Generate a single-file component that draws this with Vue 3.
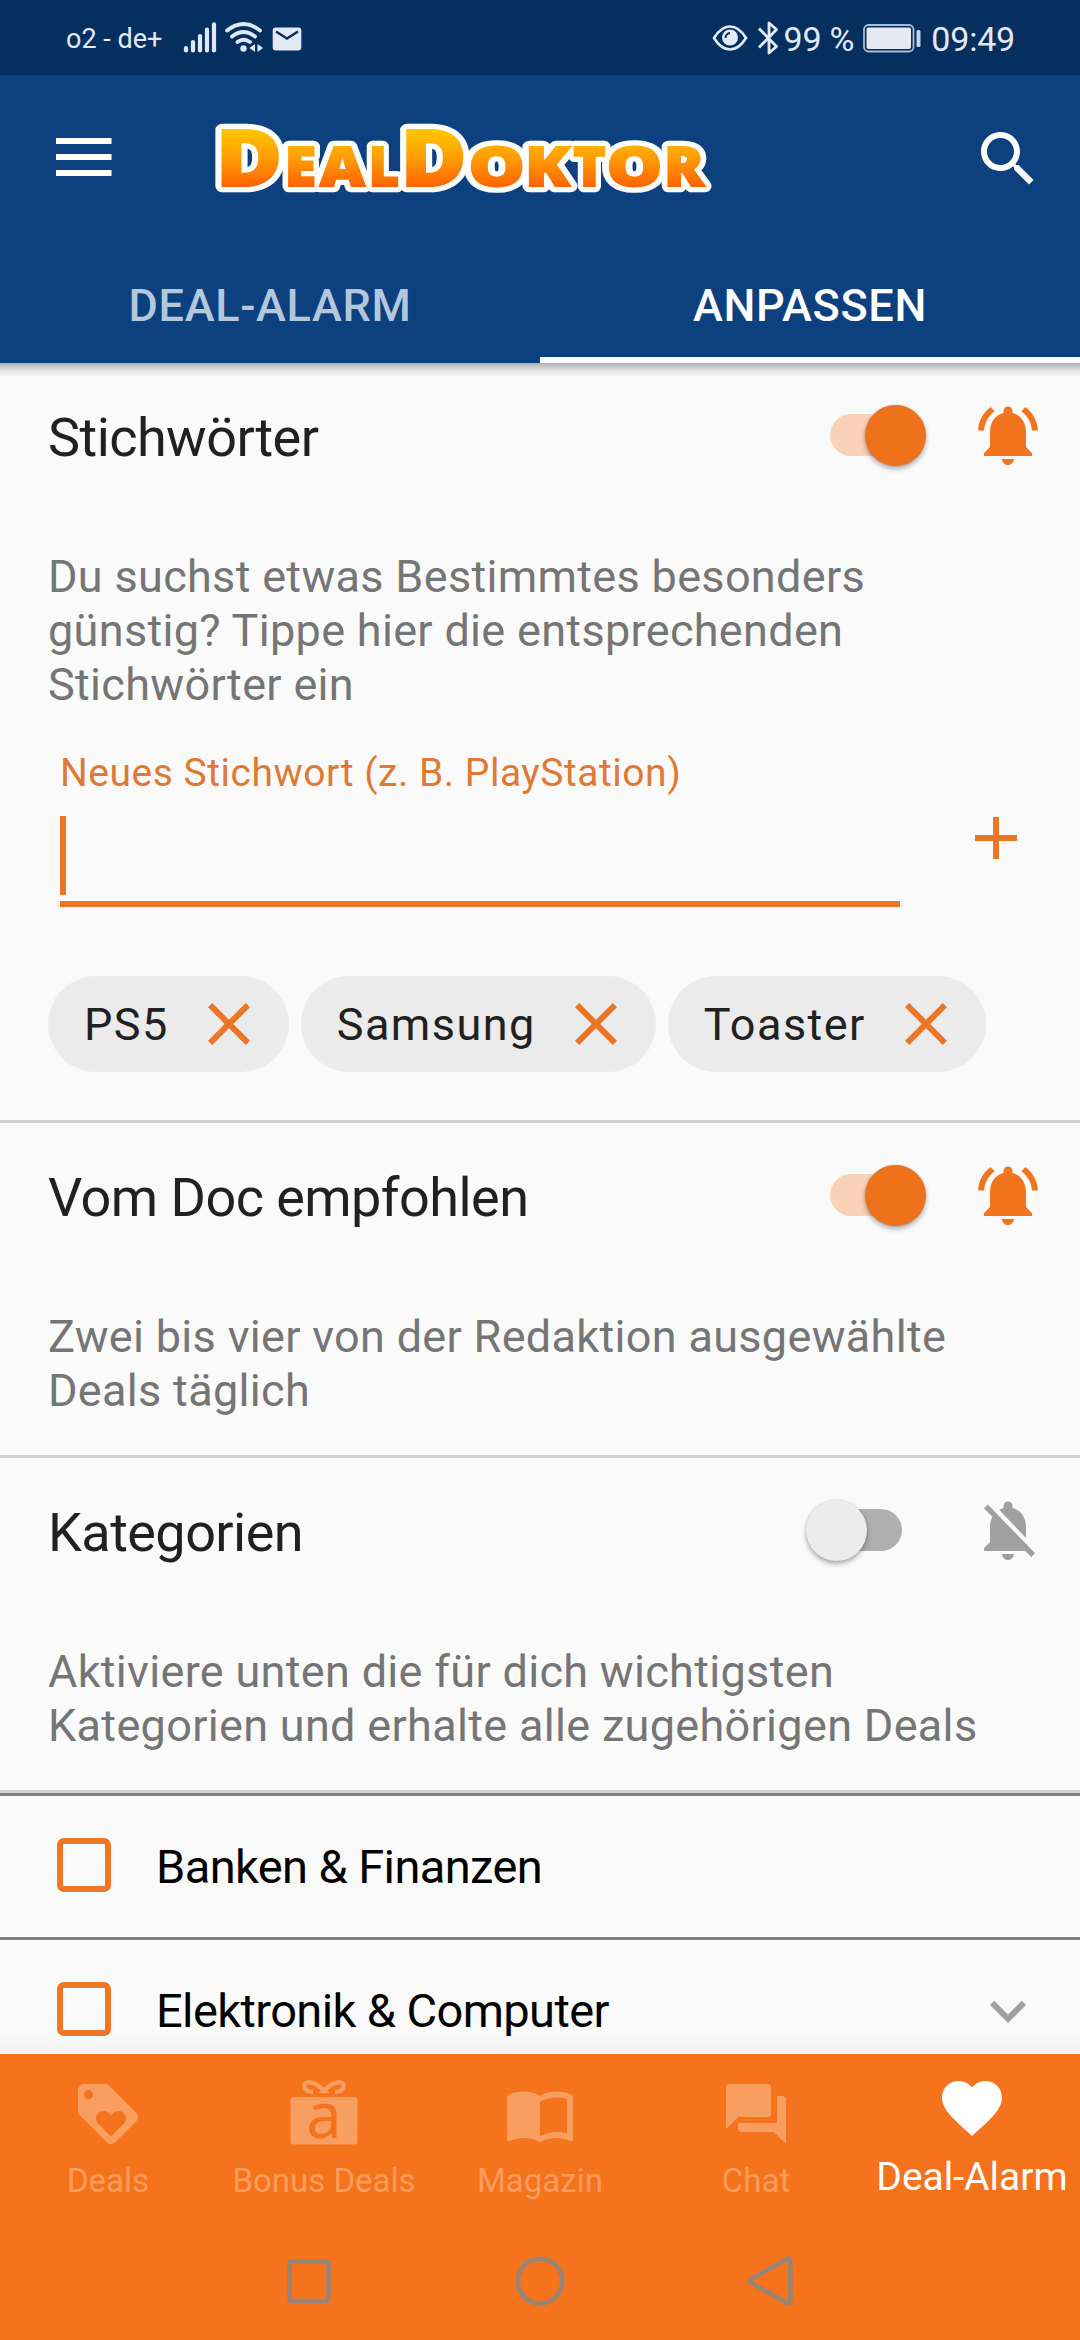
<script setup>
import { ref } from 'vue'

const logo = [
  { ch: 'D', x: 215.7, size: 78, len: 66.5 },
  { ch: 'E', x: 284.7, size: 54.6, len: 31.4 },
  { ch: 'A', x: 319.9, size: 54.6, len: 44.8 },
  { ch: 'L', x: 368.7, size: 54.6, len: 30.4 },
  { ch: 'D', x: 400.6, size: 78, len: 66.2 },
  { ch: 'O', x: 468.6, size: 54.6, len: 56.4 },
  { ch: 'K', x: 525.1, size: 54.6, len: 45 },
  { ch: 'T', x: 573.3, size: 54.6, len: 32.3 },
  { ch: 'O', x: 606.5, size: 54.6, len: 55.9 },
  { ch: 'R', x: 664, size: 54.6, len: 39.9 }
]

const bellOn =
  'M7.58 4.08L6.15 2.65C3.75 4.48 2.17 7.3 2.03 10.5h2c.15-2.65 1.51-4.97 3.55-6.42zm12.39 6.42h2c-.15-3.2-1.73-6.02-4.12-7.85l-1.42 1.43c2.02 1.45 3.39 3.77 3.54 6.42zM18 11c0-3.07-1.64-5.64-4.5-6.32V4c0-.83-.67-1.5-1.5-1.5s-1.5.67-1.5 1.5v.68C7.63 5.36 6 7.92 6 11v5l-2 2v1h16v-1l-2-2v-5zm-6 11c.14 0 .27-.01.4-.04.65-.14 1.18-.58 1.44-1.18.1-.24.15-.5.15-.78h-4c.01 1.1.9 2 2.01 2z'
const bellOff =
  'M20 18.69L7.84 6.14 5.27 3.49 4 4.76l2.8 2.8v.01c-.52.99-.8 2.16-.8 3.42v5l-2 2v1h13.73l2 2L21 19.72l-1-1.03zM12 22c1.11 0 2-.89 2-2h-4c0 1.11.89 2 2 2zm6-7.32V11c0-3.08-1.64-5.64-4.5-6.32V4c0-.83-.67-1.5-1.5-1.5s-1.5.67-1.5 1.5v.68c-.15.03-.29.08-.42.12-.1.03-.2.07-.3.11h-.01c-.01 0-.01 0-.02.01-.23.09-.46.2-.68.31 0 0-.01 0-.01.01L18 14.68z'

const sections = ref([
  {
    id: 'keywords',
    title: 'Stichwörter',
    on: true,
    text: 'Du suchst etwas Bestimmtes besonders\ngünstig? Tippe hier die entsprechenden\nStichwörter ein'
  },
  {
    id: 'doc',
    title: 'Vom Doc empfohlen',
    on: true,
    text: 'Zwei bis vier von der Redaktion ausgewählte\nDeals täglich'
  },
  {
    id: 'categories',
    title: 'Kategorien',
    on: false,
    text: 'Aktiviere unten die für dich wichtigsten\nKategorien und erhalte alle zugehörigen Deals'
  }
])

const keywords = ref(['PS5', 'Samsung', 'Toaster'])
const categories = [
  { name: 'Banken & Finanzen', expandable: false },
  { name: 'Elektronik & Computer', expandable: true }
]

const navItems = [
  {
    label: 'Deals',
    path: 'M21.41 11.58l-9-9C12.05 2.22 11.55 2 11 2H4c-1.1 0-2 .9-2 2v7c0 .55.22 1.05.59 1.42l9 9c.36.36.86.58 1.41.58.55 0 1.05-.22 1.41-.59l7-7c.37-.36.59-.86.59-1.41 0-.55-.23-1.06-.59-1.42zM5.5 7C4.67 7 4 6.33 4 5.5S4.67 4 5.5 4 7 4.67 7 5.5 6.33 7 5.5 7zm11.77 8.27L13 19.54l-4.27-4.27C8.28 14.81 8 14.19 8 13.5c0-1.38 1.12-2.5 2.5-2.5.69 0 1.32.28 1.77.74l.73.72.73-.73c.45-.45 1.08-.73 1.77-.73 1.38 0 2.5 1.12 2.5 2.5 0 .69-.28 1.32-.73 1.77z'
  },
  { label: 'Bonus Deals', gift: true },
  {
    label: 'Magazin',
    path: 'M21 5c-1.11-.35-2.33-.5-3.5-.5-1.95 0-4.05.4-5.5 1.5-1.45-1.1-3.55-1.5-5.5-1.5S2.45 4.9 1 6v14.65c0 .25.25.5.5.5.1 0 .15-.05.25-.05C3.1 20.45 5.05 20 6.5 20c1.95 0 4.05.4 5.5 1.5 1.35-.85 3.8-1.5 5.5-1.5 1.65 0 3.35.3 4.75 1.05.1.05.15.05.25.05.25 0 .5-.25.5-.5V6c-.6-.45-1.25-.75-2-1zm0 13.5c-1.1-.35-2.3-.5-3.5-.5-1.7 0-4.15.65-5.5 1.5V8c1.35-.85 3.8-1.5 5.5-1.5 1.2 0 2.4.15 3.5.5v11.5z'
  },
  {
    label: 'Chat',
    path: 'M21 6h-2v9H6v2c0 .55.45 1 1 1h11l4 4V7c0-.55-.45-1-1-1zm-4 6V3c0-.55-.45-1-1-1H3c-.55 0-1 .45-1 1v14l4-4h10c.55 0 1-.45 1-1z'
  },
  {
    label: 'Deal-Alarm',
    active: true,
    path: 'M12 21.35l-1.45-1.32C5.4 15.36 2 12.28 2 8.5 2 5.42 4.42 3 7.5 3c1.74 0 3.41.81 4.5 2.09C13.09 3.81 14.76 3 16.5 3 19.58 3 22 5.42 22 8.5c0 3.78-3.4 6.86-8.55 11.54L12 21.35z'
  }
]

function removeKeyword(word) {
  keywords.value = keywords.value.filter((k) => k !== word)
}
</script>

<template>
  <div class="screen">
    <div class="status">
      <div class="status-left">
        <span class="carrier">o2 - de+</span>
        <svg class="signal" width="34" height="32" viewBox="183 21 34 32" stroke="#dfe9fa" stroke-width="4.2" stroke-linecap="round">
          <path d="M186 48v2.5M193 42v8.5M200 36v14.5M207 29.6v20.9M214 24.3v26.2" />
        </svg>
        <svg class="wifi" width="40" height="32" viewBox="224 21 40 32" fill="none" stroke="#dfe9fa" stroke-width="3.8" stroke-linecap="round">
          <path d="M227 30.5Q243.500 17.5 260 30.5M232 36.5Q243.500 27.5 255 36.5M237.5 42Q243.500 37.5 250 42" />
          <circle cx="243.500" cy="48.5" r="3.2" fill="#dfe9fa" stroke="none" />
          <path d="M255 44v8l-5.5-4zM257.5 44v8l5.500-4z" fill="#dfe9fa" stroke="none" />
        </svg>
        <svg class="mail" width="30" height="24" viewBox="0 0 30 24">
          <rect x=".7" y=".5" width="28.6" height="23" rx="3" fill="#e3e9f4" />
          <path d="M4 4.500l11 7 11-7" fill="none" stroke="#06305f" stroke-width="2.6" />
        </svg>
      </div>
      <div class="status-right">
        <svg class="eye" width="36" height="28" viewBox="0 0 36 28">
          <path d="M2 14Q9 2.500 18 2.500T34 14Q27 25.500 18 25.500T2 14z" fill="none" stroke="#e3eaf6" stroke-width="2.6" />
          <circle cx="18" cy="13.500" r="8" fill="#e3eaf6" />
          <path d="M13.500 14a5 5 0 0 1 4.500-5" fill="none" stroke="#06305f" stroke-width="2" />
        </svg>
        <svg class="bt" width="21" height="34" viewBox="0 0 21 34" fill="none" stroke="#e3eaf6" stroke-width="2.8" stroke-linejoin="round">
          <path d="M1 7.500l17.500 18L11 32V2l7.500 6.500L1 26.500" />
        </svg>
        <span class="clock">99 %</span>
        <svg class="battery" width="59" height="29" viewBox="0 0 59 29">
          <rect x="1" y="1" width="49.500" height="26.500" rx="4.500" fill="none" stroke="#a9bbd3" stroke-width="1.8" />
          <rect x="3.500" y="3.500" width="44.500" height="21.500" rx="2" fill="#e5e9f1" />
          <rect x="53.500" y="6" width="4" height="17" rx="1.500" fill="#c8d3e3" />
        </svg>
        <span class="clock">09:49</span>
      </div>
    </div>

    <header class="appbar">
      <div class="toolbar">
        <svg class="menu" width="72" height="72" viewBox="0 0 24 24" fill="#fff">
          <path d="M3 18h18.500v-2H3v2zm0-5.330h18.500v-2H3v2zm0-7.340v2h18.500v-2H3z" />
        </svg>
        <svg class="logo" width="520" height="144" viewBox="205 86 520 144">
          <defs>
            <linearGradient id="sun" gradientUnits="userSpaceOnUse" x1="0" y1="129" x2="0" y2="187">
              <stop offset="0" stop-color="#ffc800" />
              <stop offset=".5" stop-color="#ff9d05" />
              <stop offset="1" stop-color="#ff6200" />
            </linearGradient>
          </defs>
          <text class="logo-rim" y="185.7"><tspan v-for="(l, i) in logo" :key="i" :x="l.x" :font-size="l.size" :textLength="l.len" lengthAdjust="spacingAndGlyphs">{{ l.ch }}</tspan></text>
          <text class="logo-fill" y="185.7" aria-hidden="true"><tspan v-for="(l, i) in logo" :key="i" :x="l.x" :font-size="l.size" :textLength="l.len" lengthAdjust="spacingAndGlyphs">{{ l.ch }}</tspan></text>
        </svg>
        <svg class="search" width="72" height="72" viewBox="0 0 24 24" fill="#fff">
          <path d="M15.5 14h-.79l-.28-.27C15.410 12.590 16 11.110 16 9.500 16 5.910 13.090 3 9.500 3S3 5.910 3 9.500 5.910 16 9.500 16c1.610 0 3.090-.590 4.230-1.570l.270.280v.790l5 4.990L20.490 19l-4.990-5zm-6 0C7.010 14 5 11.990 5 9.500S7.010 5 9.500 5 14 7.010 14 9.500 11.990 14 9.500 14z" />
        </svg>
      </div>
      <div class="tabs">
        <div class="tab">DEAL-ALARM</div>
        <div class="tab active">ANPASSEN</div>
      </div>
    </header>

    <main class="content">
      <section v-for="s in sections" :key="s.id" class="section">
        <div class="head">
          <h2>{{ s.title }}</h2>
          <button class="switch" :class="{ on: s.on }" @click="s.on = !s.on">
            <span class="thumb"></span>
          </button>
          <svg class="bell" :class="{ on: s.on }" width="72" height="72" viewBox="0 0 24 24">
            <path :d="s.on ? bellOn : bellOff" />
          </svg>
        </div>
        <p>{{ s.text }}</p>
        <template v-if="s.id === 'keywords'">
          <div class="entry">
            <div class="field">
              <label>Neues Stichwort (z. B. PlayStation)</label>
              <div class="caret"></div>
            </div>
            <svg class="add" width="72" height="72" viewBox="0 0 24 24"><path d="M19 13h-6v6h-2v-6H5v-2h6V5h2v6h6v2z" /></svg>
          </div>
          <div class="chips">
            <div v-for="k in keywords" :key="k" class="chip">
              <span>{{ k }}</span>
              <svg width="72" height="72" viewBox="0 0 24 24" @click="removeKeyword(k)">
                <path d="M19 6.410L17.590 5 12 10.590 6.410 5 5 6.410 10.590 12 5 17.590 6.410 19 12 13.410 17.590 19 19 17.590 13.410 12z" />
              </svg>
            </div>
          </div>
        </template>
      </section>
      <div v-for="c in categories" :key="c.name" class="category">
        <span class="box"></span>
        <span class="name">{{ c.name }}</span>
        <svg v-if="c.expandable" width="72" height="72" viewBox="0 0 24 24">
          <path d="M16.590 8.590L12 13.170 7.410 8.590 6 10l6 6 6-6z" fill="#a0a0a0" />
        </svg>
      </div>
    </main>

    <nav class="bottom">
      <div v-for="n in navItems" :key="n.label" class="item" :class="{ active: n.active }">
        <svg v-if="n.gift" width="72" height="72" viewBox="0 0 72 72">
          <path d="M25 14C16 14 13 5 20 4.300C27 4 32 8 36 13C40 8 45 4 52 4.300C59 5 56 14 47 14" fill="none" stroke="currentColor" stroke-width="4.2" />
          <path d="M30 15l6-5 6 5z" fill="currentColor" />
          <rect x="2.500" y="19" width="67" height="47.500" rx="3.500" fill="currentColor" />
          <text x="36" y="60" class="gift-letter">a</text>
        </svg>
        <svg v-else width="72" height="72" viewBox="0 0 24 24"><path :d="n.path" fill="currentColor" /></svg>
        <span>{{ n.label }}</span>
      </div>
    </nav>
    <div class="system">
      <svg width="52" height="54" viewBox="0 0 52 54"><rect x="6.500" y="7.500" width="39" height="39.500" rx="2" /></svg>
      <svg width="52" height="54" viewBox="0 0 52 54"><circle cx="26" cy="27" r="22.300" /></svg>
      <svg width="52" height="54" viewBox="0 0 52 54"><path d="M5.500 25.600L42.500 4.600Q45.300 3.800 45.300 6.500V47.500Q45.300 50.200 42.500 49.400L5.500 28.400Q3.600 27 5.500 25.600z" /></svg>
    </div>
  </div>
</template>

<style>
body {
  margin: 0;
  background: #fafafa;
}
</style>

<style scoped>
.screen {
  width: 1080px;
  height: 2340px;
  display: flex;
  flex-direction: column;
  overflow: hidden;
  background: #fafafa;
  font-family: Roboto, 'Liberation Sans', sans-serif;
}
svg {
  display: block;
  flex: none;
}
.status {
  height: 75px;
  flex: none;
  box-sizing: border-box;
  padding: 2px 65px 0 66px;
  background: #052f5f;
  color: #e3eaf6;
  display: flex;
  justify-content: space-between;
  align-items: center;
  white-space: nowrap;
}
.status-left,
.status-right {
  display: flex;
  align-items: center;
}
.carrier {
  font-size: 27px;
  width: 117px;
}
.signal,
.wifi {
  margin-top: -3px;
}
.wifi {
  margin-left: 7px;
}
.mail {
  margin-left: 8px;
}
.clock {
  font-size: 34px;
  letter-spacing: -0.2px;
}
.eye {
  margin-top: -2px;
}
.bt {
  margin: -2px 5px 0 10px;
}
.battery {
  margin: -1px 9px 0 9px;
}
.appbar {
  height: 288px;
  flex: none;
  background: #0d407f;
  position: relative;
  z-index: 1;
}
.appbar::after {
  content: '';
  position: absolute;
  top: 288px;
  left: 0;
  right: 0;
  height: 14px;
  background: linear-gradient(rgba(0, 0, 0, 0.3), rgba(0, 0, 0, 0.1) 50%, rgba(0, 0, 0, 0));
}
.toolbar {
  height: 168px;
  display: flex;
  align-items: center;
  padding: 0 36px 0 47px;
}
.menu {
  margin-top: -2px;
}
.logo {
  margin: -2px auto 0 86px;
}
.logo text {
  font-family: 'Open Sans', 'Noto Sans', sans-serif;
  font-weight: 800;
}
.logo-rim {
  fill: #fff;
  stroke: #fff;
  stroke-width: 12.6px;
  stroke-linejoin: round;
}
.logo-fill {
  fill: url(#sun);
  stroke: url(#sun);
  stroke-width: 2px;
}
.tabs {
  height: 120px;
  display: flex;
}
.tab {
  flex: 1;
  box-sizing: border-box;
  padding-top: 10px;
  border-bottom: 6px solid transparent;
  display: flex;
  align-items: center;
  justify-content: center;
  font-size: 45px;
  font-weight: 500;
  letter-spacing: 0.65px;
  color: #b4c7dd;
}
.tab.active {
  color: #fff;
  border-color: #fff;
}
.content {
  flex: 1;
  min-height: 0;
  overflow: hidden;
  position: relative;
}
.content::after {
  content: '';
  position: absolute;
  left: 0;
  right: 0;
  bottom: 0;
  height: 20px;
  background: linear-gradient(rgba(0, 0, 0, 0), rgba(0, 0, 0, 0.03));
}
.section {
  border-bottom: 3px solid #cfcfcf;
  padding: 0 36px 37px 48px;
}
.section:first-child {
  padding-bottom: 48px;
}
.head {
  height: 144px;
  display: flex;
  align-items: center;
}
h2 {
  flex: 1;
  margin: 0;
  padding-top: 5px;
  font-size: 54px;
  font-weight: 400;
  letter-spacing: -0.55px;
  color: #212121;
}
.switch {
  position: relative;
  width: 120px;
  height: 60px;
  margin-right: 46px;
  padding: 0;
  border: 0;
  display: flex;
  align-items: center;
  background: none;
}
.switch::before {
  content: '';
  position: absolute;
  left: 18px;
  top: 9px;
  width: 78px;
  height: 42px;
  border-radius: 21px;
  background: #afafaf;
}
.switch.on::before {
  left: 24px;
  background: #f9d2b8;
}
.thumb {
  position: relative;
  width: 61px;
  height: 61px;
  border-radius: 50%;
  background: #ececec;
  box-shadow: 0 3px 5px rgba(0, 0, 0, 0.3), 0 0 2px rgba(0, 0, 0, 0.15);
}
.switch.on .thumb {
  margin-left: auto;
  background: #ee711b;
}
.bell {
  fill: #a0a0a0;
}
.bell.on {
  fill: #f2741f;
}
p {
  margin: 43px 0 0;
  font-size: 45px;
  line-height: 54px;
  letter-spacing: 0.32px;
  color: #757575;
  white-space: pre;
}
.entry {
  display: flex;
  justify-content: space-between;
  padding: 38px 12px 0 12px;
}
.field {
  width: 840px;
  border-bottom: 6px solid #ec7627;
  color: #de7a35;
}
label {
  display: block;
  height: 46px;
  line-height: 46px;
  font-size: 39px;
  letter-spacing: 0.52px;
}
.caret {
  width: 6px;
  height: 79px;
  margin: 20px 0 6px;
  background: #ec7627;
}
.add {
  margin-top: 52px;
}
.add,
.chip svg {
  fill: #ec7627;
}
.chips {
  display: flex;
  gap: 12px;
  margin-top: 69px;
}
.chip {
  height: 96px;
  box-sizing: border-box;
  border-radius: 48px;
  padding: 0 24px 0 36px;
  background: #ebebeb;
  display: flex;
  align-items: center;
  gap: 24px;
  font-size: 45px;
  letter-spacing: 1.45px;
  color: #212121;
}
.category {
  height: 141px;
  border-top: 3px solid #808080;
  padding: 0 36px 0 57px;
  display: flex;
  align-items: center;
}
.box {
  width: 54px;
  height: 54px;
  box-sizing: border-box;
  border: 6px solid #ee7625;
  border-radius: 7px;
  margin-top: -3px;
}
.name {
  flex: 1;
  margin-left: 45px;
  font-size: 47px;
  letter-spacing: -0.6px;
  color: #000;
}
.bottom {
  height: 168px;
  flex: none;
  background: #f5731d;
  display: flex;
}
.item {
  width: 216px;
  box-sizing: border-box;
  padding-top: 24px;
  display: flex;
  flex-direction: column;
  align-items: center;
  color: #f89e61;
  white-space: nowrap;
}
.item span {
  font-size: 33px;
  line-height: 40px;
  margin-top: 11px;
  color: #fa9c5c;
}
.item.active {
  padding-top: 18px;
  color: #fff;
}
.item.active span {
  font-size: 39px;
  line-height: 46px;
  margin-top: 10px;
  color: #fff;
}
.gift-letter {
  font-family: 'Noto Sans', sans-serif;
  font-size: 63px;
  font-weight: 400;
  text-anchor: middle;
  fill: #f5731d;
}
.system {
  height: 118px;
  flex: none;
  box-sizing: border-box;
  background: #f5731d;
  display: flex;
  justify-content: center;
  align-items: center;
  gap: 179px;
}
.system svg {
  fill: none;
  stroke: #998375;
  stroke-width: 4.6px;
}
</style>
